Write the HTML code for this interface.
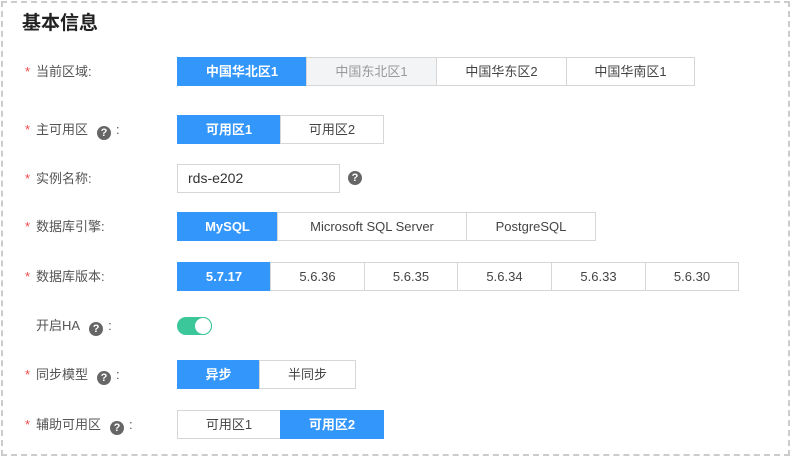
<!DOCTYPE html>
<html><head><meta charset="utf-8"><style>
*{box-sizing:border-box;margin:0;padding:0}
body{width:791px;height:457px;background:#fff;font-family:"Liberation Sans","Noto Sans CJK SC",sans-serif;position:relative;overflow:hidden;color:#333}
.frame{position:absolute;left:1px;top:1px;width:789px;height:455px;border:2px dashed #ccc}
.title{position:absolute;left:22px;top:8px;font-size:19px;font-weight:bold;color:#222}
.lbl{position:absolute;left:25px;font-size:13px;color:#555;height:29px;line-height:29px;white-space:nowrap}
.lbl .s{color:#f04848;display:inline-block;width:11px}
.q{display:inline-block;width:14px;height:14px;border-radius:50%;background:#666;color:#fff;font-size:11px;line-height:14px;text-align:center;font-weight:bold;vertical-align:-2px;margin:0 5px 0 9px}
.b{position:absolute;height:29px;line-height:27px;border:1px solid #d6d6d6;text-align:center;font-size:13px;color:#444;background:#fff}
.on{background:#3396fb;border-color:#3396fb;color:#fff;font-weight:bold}
.dis{background:#f3f4f5;color:#999}
</style></head><body>
<div class="frame"></div>
<div class="title">基本信息</div>

<div class="lbl" style="top:57px"><span class="s">*</span>当前区域:</div>
<div class="b on" style="left:177px;top:57px;width:130px">中国华北区1</div>
<div class="b dis" style="left:306px;top:57px;width:131px">中国东北区1</div>
<div class="b" style="left:436px;top:57px;width:131px">中国华东区2</div>
<div class="b" style="left:566px;top:57px;width:129px">中国华南区1</div>

<div class="lbl" style="top:115px"><span class="s">*</span>主可用区<span class="q">?</span>:</div>
<div class="b on" style="left:177px;top:115px;width:104px">可用区1</div>
<div class="b" style="left:280px;top:115px;width:104px">可用区2</div>

<div class="lbl" style="top:164px"><span class="s">*</span>实例名称:</div>
<div class="b" style="left:177px;top:164px;width:163px;text-align:left;padding-left:10px;font-size:14px;color:#333">rds-e202</div>
<span class="q" style="position:absolute;left:339px;top:171px">?</span>

<div class="lbl" style="top:212px"><span class="s">*</span>数据库引擎:</div>
<div class="b on" style="left:177px;top:212px;width:101px">MySQL</div>
<div class="b" style="left:277px;top:212px;width:190px">Microsoft SQL Server</div>
<div class="b" style="left:466px;top:212px;width:130px">PostgreSQL</div>

<div class="lbl" style="top:262px"><span class="s">*</span>数据库版本:</div>
<div class="b on" style="left:177px;top:262px;width:94px">5.7.17</div>
<div class="b" style="left:270px;top:262px;width:95px">5.6.36</div>
<div class="b" style="left:364px;top:262px;width:94px">5.6.35</div>
<div class="b" style="left:457px;top:262px;width:95px">5.6.34</div>
<div class="b" style="left:551px;top:262px;width:95px">5.6.33</div>
<div class="b" style="left:645px;top:262px;width:94px">5.6.30</div>

<div class="lbl" style="top:311px"><span class="s"></span>开启HA<span class="q">?</span>:</div>
<div style="position:absolute;left:177px;top:317px;width:35px;height:18px;border-radius:9px;background:#3cc79a"></div>
<div style="position:absolute;left:194px;top:317px;width:18px;height:18px;border-radius:50%;background:#fff;border:1px solid #3cc79a"></div>

<div class="lbl" style="top:360px"><span class="s">*</span>同步模型<span class="q">?</span>:</div>
<div class="b on" style="left:177px;top:360px;width:83px">异步</div>
<div class="b" style="left:259px;top:360px;width:97px">半同步</div>

<div class="lbl" style="top:410px"><span class="s">*</span>辅助可用区<span class="q">?</span>:</div>
<div class="b" style="left:177px;top:410px;width:104px">可用区1</div>
<div class="b on" style="left:280px;top:410px;width:104px">可用区2</div>
</body></html>
